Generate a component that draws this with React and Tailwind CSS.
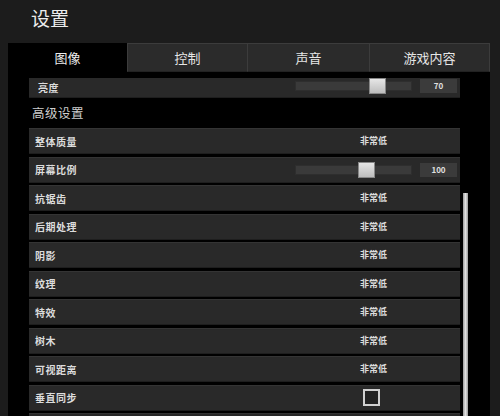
import React from "react";

const font = { fontFamily: '"Noto Sans CJK SC", "Noto Sans", sans-serif' };

function Slider({ pos, value }) {
  return (
    <div className="flex items-center h-full">
      <div className="relative w-[117px] h-[10px] bg-[#3a3a3a] border border-[#2e2e2e]">
        <div
          className="absolute top-1/2 -translate-y-1/2 w-[17px] h-[16px] bg-gradient-to-b from-[#e6e6e6] to-[#bdbdbd] border border-[#888]"
          style={{ left: pos }}
        />
      </div>
      <div className="ml-[8px] w-[37px] h-[14px] bg-[#3b3b3b] flex items-center justify-center text-[8px] text-[#e0e0e0] font-bold">
        {value}
      </div>
    </div>
  );
}

function Row({ label, value, children, slider }) {
  return (
    <div className="h-[26px] bg-[#292929] border-t border-[#343434] border-b border-b-[#1e1e1e] flex items-center shrink-0">
      <div className="pl-[6px] w-[266px] text-[10px] font-bold text-[#dcdcdc] tracking-[0.5px]">{label}</div>
      <div className={"w-[157px] h-full flex items-center " + (slider ? "justify-start" : "justify-center")}>
        {children ? children : <span className="text-[9px] font-bold text-[#dcdcdc]">{value}</span>}
      </div>
    </div>
  );
}

export default function App() {
  const rows = [
    ["整体质量", "非常低"],
    ["屏幕比例", null, <Slider pos={62} value="100" />, true],
    ["抗锯齿", "非常低"],
    ["后期处理", "非常低"],
    ["阴影", "非常低"],
    ["纹理", "非常低"],
    ["特效", "非常低"],
    ["树木", "非常低"],
    ["可视距离", "非常低"],
    ["垂直同步", null, <div className="w-[17px] h-[17px] border-2 border-[#d0d0d0] bg-[#222] ml-[-4px]" />],
    ["", ""],
  ];
  return (
    <div className="w-[500px] h-[416px] bg-[#1c1c1c] overflow-hidden" style={font}>
      <div className="h-[43px] pl-[31px] pt-[5px] text-[19px] text-[#ececec] leading-[26px]">设置</div>
      <div className="ml-[8px] w-[482px] h-[373px] bg-black flex flex-col overflow-hidden">
        <div className="h-[29px] flex shrink-0">
          <div className="w-[119px] flex items-center justify-center text-[13px] text-[#ececec]">图像</div>
          <div className="w-[121px] bg-[#2b2b2b] border border-[#3c3c3c] border-b-[#222] flex items-center justify-center text-[13px] text-[#e6e6e6]">控制</div>
          <div className="w-[122px] bg-[#2b2b2b] border border-l-0 border-[#3c3c3c] border-b-[#222] flex items-center justify-center text-[13px] text-[#e6e6e6]">声音</div>
          <div className="w-[120px] bg-[#2b2b2b] border border-l-0 border-[#3c3c3c] border-b-[#222] flex items-center justify-center text-[13px] text-[#e6e6e6]">游戏内容</div>
        </div>
        <div className="relative flex-1 overflow-hidden">
          <div className="pl-[21px] w-[452px] pt-[6px] flex flex-col">
            <div className="h-[20px] overflow-hidden bg-[#292929] border-b border-[#1e1e1e]">
              <div className="h-[25px] -mt-[5px] flex items-center">
                <div className="pl-[9px] w-[266px] text-[10px] font-bold text-[#dcdcdc] tracking-[0.5px] pt-[3px]">亮度</div>
                <div className="h-full flex items-center">
                  <Slider pos={73} value="70" />
                </div>
              </div>
            </div>
            <div className="h-[30px] pl-[3px] flex items-center text-[12.5px] text-[#cfcfcf] tracking-[0.5px]">高级设置</div>
            <div className="flex flex-col gap-[2.5px]">
              {rows.map(([l, v, c, s], i) => (
                <Row key={i} label={l} value={v} slider={s}>
                  {c}
                </Row>
              ))}
            </div>
          </div>
          <div className="absolute left-[455px] top-[121px] w-[5px] bottom-0 bg-gradient-to-r from-[#9a9a9a] via-[#e0e0e0] to-[#9a9a9a]" />
        </div>
      </div>
    </div>
  );
}
